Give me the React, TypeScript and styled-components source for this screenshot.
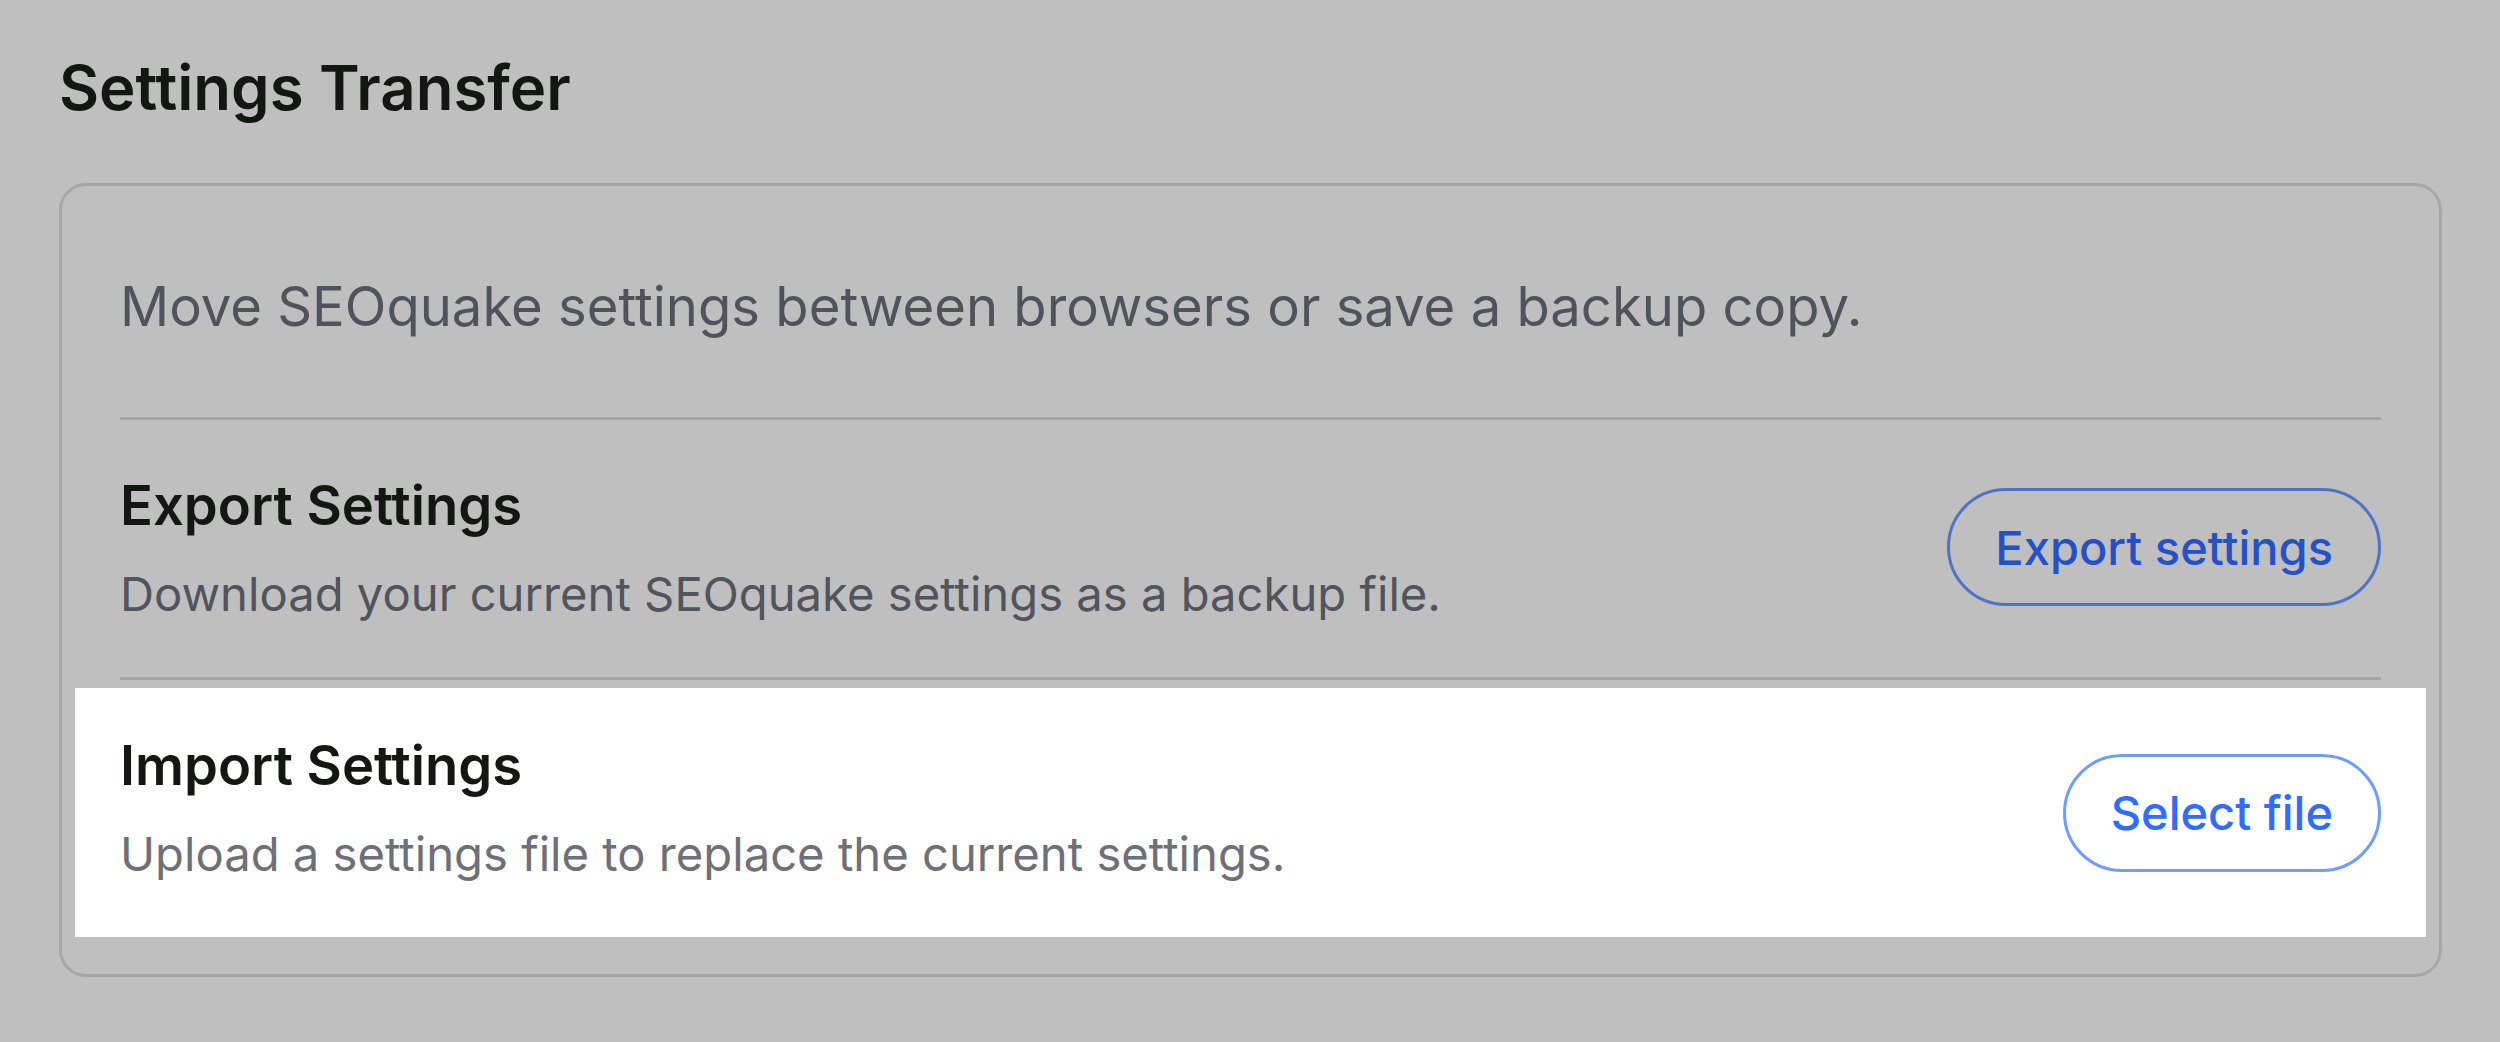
import styled, { createGlobalStyle } from 'styled-components'

const GlobalStyle = createGlobalStyle`
  html, body {
    margin: 0;
    padding: 0;
    background: #bfbfbf;
  }
  body {
    font-family: Inter, 'Noto Sans', 'Liberation Sans', sans-serif;
    -webkit-font-smoothing: antialiased;
  }
  * {
    box-sizing: border-box;
  }
`

const Page = styled.main`
  min-height: 1042px;
  padding: 51px 58px 59px 59px;
`

const Title = styled.h1`
  margin: 0 0 59px;
  font-size: 61.7px;
  line-height: 73px;
  font-weight: 600;
  color: #131612;
`

const Card = styled.section`
  border: 3px solid #a7a7a7;
  border-radius: 27px;
  padding: 80px 58px 37px;
`

const Intro = styled.p`
  margin: 0 0 70px;
  font-size: 54.4px;
  line-height: 81px;
  color: #51535c;
`

const Divider = styled.hr`
  margin: 0;
  border: 0;
  height: 3px;
  background: #a5a5a5;
`

// the highlighted row is the tour spotlight: white, and a bit wider than the content
const Row = styled.div<{ $spotlight?: boolean }>`
  display: flex;
  align-items: center;
  justify-content: space-between;
  gap: 40px;
  padding: 45px 0 48px;

  ${({ $spotlight }) =>
    $spotlight &&
    `
    margin: 8px -45px 0;
    padding: 37px 45px 48px;
    background: #ffffff;
  `}
`

const Text = styled.div`
  display: flex;
  flex-direction: column;
  gap: 12px;
`

const Heading = styled.h2`
  margin: 0;
  font-size: 54.4px;
  line-height: 81px;
  font-weight: 600;
  color: #131612;
`

const Hint = styled.p<{ $spotlight?: boolean }>`
  margin: 0;
  font-size: 47.2px;
  line-height: 71px;
  color: ${({ $spotlight }) => ($spotlight ? '#6d6f79' : '#52545d')};
`

const OutlineButton = styled.button<{ $spotlight?: boolean }>`
  flex: none;
  height: 118px;
  margin-top: ${({ $spotlight }) => ($spotlight ? '11px' : '0')};
  padding: 0 45px;
  border-radius: 59px;
  border: 3px solid ${({ $spotlight }) => ($spotlight ? '#6e9cff' : '#5173c6')};
  background: transparent;
  font-family: inherit;
  font-size: 47px;
  line-height: 71px;
  font-weight: 500;
  color: ${({ $spotlight }) => ($spotlight ? '#2f6cff' : '#2451c9')};
  cursor: pointer;
`

const sections = [
  {
    title: 'Export Settings',
    hint: 'Download your current SEOquake settings as a backup file.',
    action: 'Export settings',
    spotlight: false
  },
  {
    title: 'Import Settings',
    hint: 'Upload a settings file to replace the current settings.',
    action: 'Select file',
    spotlight: true
  }
]

export default function App() {
  return (
    <>
      <GlobalStyle />
      <Page>
        <Title>Settings Transfer</Title>
        <Card>
          <Intro>Move SEOquake settings between browsers or save a backup copy.</Intro>
          {sections.map((section) => (
            <div key={section.title}>
              <Divider />
              <Row $spotlight={section.spotlight}>
                <Text>
                  <Heading>{section.title}</Heading>
                  <Hint $spotlight={section.spotlight}>{section.hint}</Hint>
                </Text>
                <OutlineButton $spotlight={section.spotlight}>{section.action}</OutlineButton>
              </Row>
            </div>
          ))}
        </Card>
      </Page>
    </>
  )
}
